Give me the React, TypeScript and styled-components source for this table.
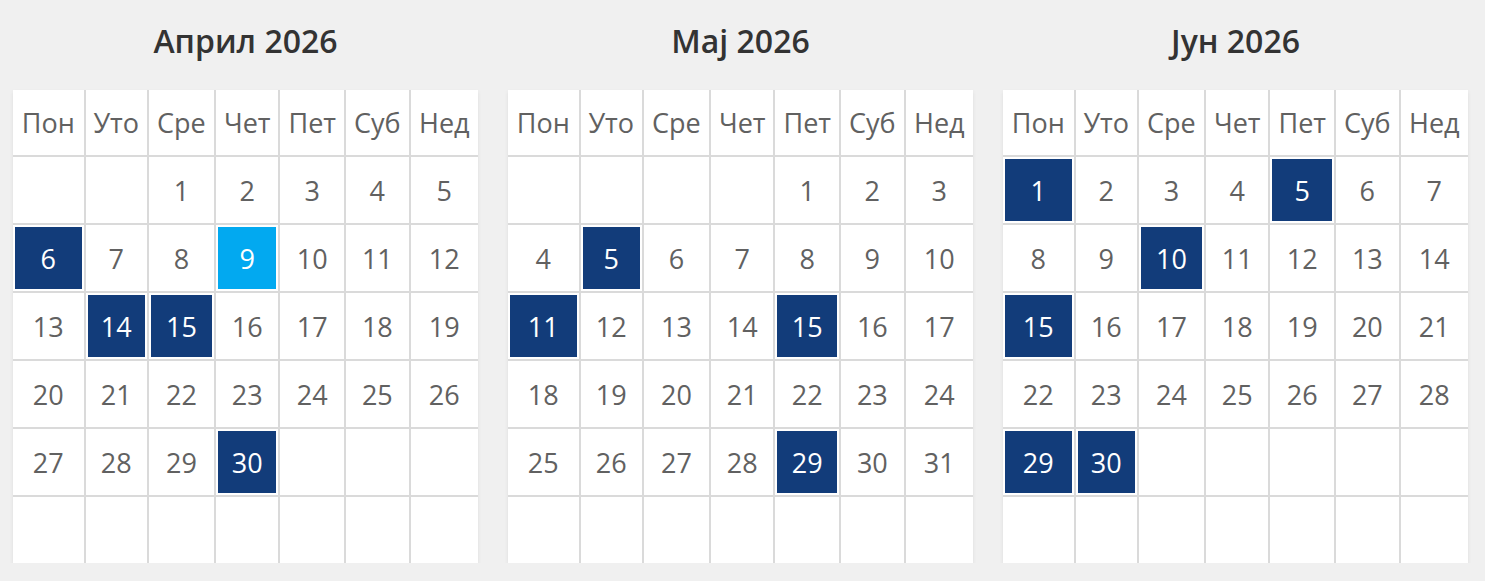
import React from 'react';
import styled, { createGlobalStyle } from 'styled-components';

const GlobalStyle = createGlobalStyle`
  html, body {
    margin: 0;
    padding: 0;
    background: #f0f0f0;
    font-family: "Open Sans", "Noto Sans", sans-serif;
  }
`;

const Page = styled.div`
  display: flex;
  gap: 30px;
  padding: 0 13px;
`;

const Month = styled.div`
  width: 465px;
  display: flex;
  flex-direction: column;
`;

const Title = styled.h2`
  margin: 0 0 8px 0;
  height: 82px;
  line-height: 82px;
  text-align: center;
  font-size: 32px;
  font-weight: 600;
  color: #333;
`;

const Table = styled.table`
  width: 100%;
  border-collapse: collapse;
  background: #fff;
  box-shadow: 0 2px 4px rgba(0, 0, 0, 0.08);
`;

const Head = styled.th`
  height: 65px;
  padding: 0;
  font-size: 27px;
  font-weight: 400;
  color: #616161;
  text-align: center;
  border-right: 2px solid #dadada;
  border-bottom: 2px solid #dadada;

  &:last-child {
    border-right: none;
  }
`;

const Row = styled.tr`
  &:last-child td {
    border-bottom: none;
  }
`;

const Day = styled.td<{ $mark?: 'event' | 'today' }>`
  height: 66px;
  padding: 0;
  font-size: 27px;
  color: ${(p) => (p.$mark ? '#fff' : '#616161')};
  text-align: center;
  border-right: 2px solid #dadada;
  border-bottom: 2px solid #dadada;
  background: ${(p) => (p.$mark === 'event' ? '#123c7a' : p.$mark === 'today' ? '#02a9f0' : '#fff')};
  box-shadow: ${(p) => (p.$mark ? 'inset 0 0 0 2px #fff' : 'none')};

  &:last-child {
    border-right: none;
  }
`;

const weekDays = ['Пон', 'Уто', 'Сре', 'Чет', 'Пет', 'Суб', 'Нед'];

type MonthData = {
  title: string;
  offset: number;
  days: number;
  events: number[];
  today?: number;
};

const months: MonthData[] = [
  { title: 'Април 2026', offset: 2, days: 30, events: [6, 14, 15, 30], today: 9 },
  { title: 'Мај 2026', offset: 4, days: 31, events: [5, 11, 15, 29] },
  { title: 'Јун 2026', offset: 0, days: 30, events: [1, 5, 10, 15, 29, 30] },
];

const buildWeeks = (offset: number, days: number) => {
  const cells: (number | null)[] = [];
  for (let i = 0; i < offset; i++) cells.push(null);
  for (let d = 1; d <= days; d++) cells.push(d);
  while (cells.length < 42) cells.push(null);
  const weeks: (number | null)[][] = [];
  for (let i = 0; i < 42; i += 7) weeks.push(cells.slice(i, i + 7));
  return weeks;
};

const Calendar: React.FC<{ data: MonthData }> = ({ data }) => {
  const weeks = buildWeeks(data.offset, data.days);
  return (
    <Month>
      <Title>{data.title}</Title>
      <Table>
        <thead>
          <tr>
            {weekDays.map((w) => (
              <Head key={w}>{w}</Head>
            ))}
          </tr>
        </thead>
        <tbody>
          {weeks.map((week, wi) => (
            <Row key={wi}>
              {week.map((d, di) => (
                <Day
                  key={di}
                  $mark={d === null ? undefined : d === data.today ? 'today' : data.events.includes(d) ? 'event' : undefined}
                >
                  {d ?? ''}
                </Day>
              ))}
            </Row>
          ))}
        </tbody>
      </Table>
    </Month>
  );
};

const App: React.FC = () => (
  <>
    <GlobalStyle />
    <Page>
      {months.map((m) => (
        <Calendar key={m.title} data={m} />
      ))}
    </Page>
  </>
);

export default App;
